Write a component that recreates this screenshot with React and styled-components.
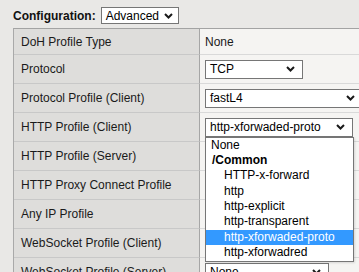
import React from "react";
import styled, { createGlobalStyle } from "styled-components";

const GlobalStyle = createGlobalStyle`
  *, *::before, *::after { box-sizing: border-box; }
  html, body {
    margin: 0;
    padding: 0;
    background: #e9e8e6;
    overflow: hidden;
  }
  body {
    font-family: "Liberation Sans", Arial, sans-serif;
    font-size: 12px;
    color: #1a1a1a;
  }
`;

const rows = [
  { label: "DoH Profile Type", text: "None", height: 26 },
  { label: "Protocol", value: "TCP", width: 98 },
  { label: "Protocol Profile (Client)", value: "fastL4", width: 158 },
  { label: "HTTP Profile (Client)", value: "http-xforwaded-proto", width: 148, open: true },
  { label: "HTTP Profile (Server)", value: "None", width: 124 },
  { label: "HTTP Proxy Connect Profile", value: "None", width: 124 },
  { label: "Any IP Profile", value: "None", width: 124 },
  { label: "WebSocket Profile (Client)", value: "None", width: 124 },
  { label: "WebSocket Profile (Server)", value: "None", width: 124 },
];

const options = [
  { text: "None" },
  { text: "/Common", group: true },
  { text: "HTTP-x-forward", nested: true },
  { text: "http", nested: true },
  { text: "http-explicit", nested: true },
  { text: "http-transparent", nested: true },
  { text: "http-xforwaded-proto", nested: true, selected: true },
  { text: "http-xforwadred", nested: true },
];

function Chevron() {
  return (
    <ChevronSvg width="9" height="6" viewBox="0 0 9 6">
      <path d="M1 1 L4.5 4.5 L8 1" stroke="#1a1a1a" strokeWidth="2" fill="none" />
    </ChevronSvg>
  );
}

function Select({ value, width, height = 19, right = 7, open }) {
  return (
    <SelectWrap>
      <SelectBox width={width} height={height} right={right}>
        <span>{value}</span>
        <Chevron />
      </SelectBox>
      {open && (
        <Dropdown>
          {options.map((o) => (
            <Option
              key={o.text}
              group={o.group}
              nested={o.nested}
              selected={o.selected}
            >
              {o.text}
            </Option>
          ))}
        </Dropdown>
      )}
    </SelectWrap>
  );
}

export default function App() {
  return (
    <Page>
      <GlobalStyle />
      <Header>
        <HeaderLabel>Configuration:</HeaderLabel>
        <Select value="Advanced" width={78} height={17} right={5} />
      </Header>
      <Table>
        {rows.map((r) => (
          <Row key={r.label} height={r.height}>
            <LabelCell>{r.label}</LabelCell>
            <ValueCell>
              {r.text ? r.text : <Select value={r.value} width={r.width} open={r.open} />}
            </ValueCell>
          </Row>
        ))}
      </Table>
    </Page>
  );
}

const Page = styled.div`
  width: 359px;
  height: 272px;
  overflow: hidden;
`;

const Header = styled.div`
  display: flex;
  align-items: center;
  gap: 5px;
  padding: 7px 0 0 13px;
`;

const HeaderLabel = styled.span`
  font-weight: bold;
  color: #111;
`;

const Table = styled.div`
  margin: 4px 0 0 13px;
  width: 460px;
  border-left: 1px solid #a9a9a9;
  border-top: 1px solid #a3a3a3;
`;

const Row = styled.div`
  display: grid;
  grid-template-columns: 186px 1fr;
  height: ${(p) => p.height || 29}px;
`;

const LabelCell = styled.div`
  display: flex;
  align-items: center;
  padding-left: 7px;
  background: #dedddb;
  border-right: 1px solid #a6a6a6;
  border-bottom: 1px solid #c8c8c8;
  white-space: nowrap;
`;

const ValueCell = styled.div`
  display: flex;
  align-items: center;
  padding-left: 5px;
  background: #f5f4f2;
  border-bottom: 1px solid #d9d9d9;
`;

const SelectWrap = styled.div`
  position: relative;
`;

const SelectBox = styled.div`
  display: flex;
  align-items: center;
  justify-content: space-between;
  width: ${(p) => p.width}px;
  height: ${(p) => p.height}px;
  padding: 0 ${(p) => p.right}px 0 4px;
  background: #fff;
  border: 1px solid #767676;
  color: #000;
  white-space: nowrap;
`;

const ChevronSvg = styled.svg`
  flex: none;
`;

const Dropdown = styled.div`
  position: absolute;
  top: 100%;
  left: 0;
  width: 149px;
  z-index: 10;
  background: #fff;
  border: 1px solid #767676;
  box-shadow: 1px 1px 2px rgba(0, 0, 0, 0.12);
`;

const Option = styled.div`
  height: 15.4px;
  line-height: 15.4px;
  padding-left: ${(p) => (p.nested ? 18 : p.group ? 6 : 5)}px;
  font-weight: ${(p) => (p.group ? "bold" : "normal")};
  background: ${(p) => (p.selected ? "#3399ff" : "transparent")};
  color: ${(p) => (p.selected ? "#fff" : "#000")};
  white-space: nowrap;
`;
